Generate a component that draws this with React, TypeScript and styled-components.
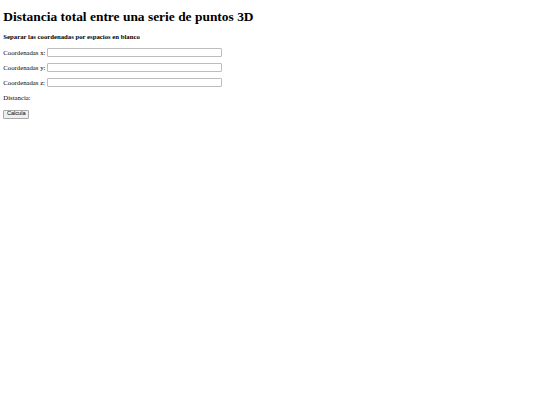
import { FC } from "react";
import styled, { createGlobalStyle } from "styled-components";

// the reference is a default-styled page shown at about 0.42 scale
const S = 0.42;
const px = (n: number) => `${(n * S).toFixed(2)}px`;

const GlobalStyle = createGlobalStyle`
  html, body {
    background: #ffffff;
  }
  body {
    margin: ${px(8)};
    font-family: "Liberation Serif", "Times New Roman", serif;
    font-size: ${px(16)};
    color: #000000;
  }
`;

const Title = styled.h1`
  font-size: ${px(32)};
  font-weight: bold;
  margin: 6px 0 7.4px;
`;

const Hint = styled.h4`
  font-size: ${px(16)};
  font-weight: bold;
  margin: 7.4px 0 8px;
`;

const Row = styled.p`
  margin: 6.3px 0;
  display: flex;
  align-items: center;
  gap: 2px;
`;

const Label = styled.label`
  white-space: nowrap;
`;

const Field = styled.input`
  box-sizing: border-box;
  width: 175px;
  height: 9px;
  padding: 0 1px;
  border: 1px solid #bdbdbd;
  border-radius: 1px;
  font-size: ${px(13.33)};
  background: #ffffff;
  outline: none;
`;

const Result = styled.p`
  margin: 6.6px 0 8.3px;
`;

const Button = styled.button`
  box-sizing: border-box;
  height: 9px;
  padding: 0 ${px(6)};
  font-family: "Liberation Sans", Arial, sans-serif;
  font-size: ${px(13.33)};
  line-height: 1;
  color: #000000;
  background: #efefef;
  border: 1px solid #a8a8a8;
  border-radius: 1px;
`;

const axes = ["x", "y", "z"];

const App: FC = () => {
  return (
    <>
      <GlobalStyle />
      <Title>Distancia total entre una serie de puntos 3D</Title>
      <Hint>Separar las coordenadas por espacios en blanco</Hint>
      {axes.map((axis) => (
        <Row key={axis}>
          <Label htmlFor={`coord-${axis}`}>Coordenadas {axis}:</Label>
          <Field id={`coord-${axis}`} type="text" />
        </Row>
      ))}
      <Result>Distancia:</Result>
      <Button type="button">Calcula</Button>
    </>
  );
};

export default App;
